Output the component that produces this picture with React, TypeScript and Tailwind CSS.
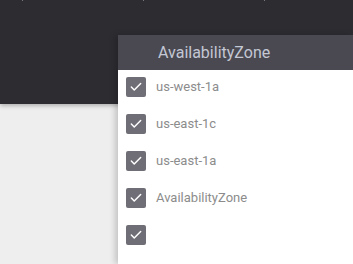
import { Check } from 'lucide-react';

const zones = ['us-west-1a', 'us-east-1c', 'us-east-1a', 'AvailabilityZone', ''];

export default function App() {
  return (
    <div className="relative w-[353px] h-[264px] overflow-hidden bg-[#eeeeee]" style={{ fontFamily: 'Roboto, sans-serif' }}>
      <div className="h-[104px] bg-[#2d2c31] shadow-[0_2px_4px_rgba(0,0,0,0.25)] relative">
        <div className="flex">
          <span className="ml-[22px] w-px h-px bg-[#77767c]" />
          <span className="ml-[120px] w-px h-px bg-[#77767c]" />
          <span className="ml-[120px] w-px h-px bg-[#77767c]" />
        </div>
      </div>

      <div className="absolute left-[118px] top-[35px] right-0 bottom-0 bg-white shadow-[-3px_0_6px_rgba(0,0,0,0.18)]">
        <div className="h-[35px] bg-[#4a4952] flex items-center pl-[40px] text-[16px] text-[#c4c7d4]">
          AvailabilityZone
        </div>
        <ul>
          {zones.map((z, i) => (
            <li key={i} className="h-[37px] flex items-start pt-[7px] pl-[8px]">
              <span className="w-[20px] h-[20px] rounded-[2px] bg-[#6f6e76] flex items-center justify-center">
                <Check size={14} strokeWidth={2.5} className="text-white" />
              </span>
              <span className="ml-[10px] text-[13px] leading-[20px] text-[#8c8c8c]">{z}</span>
            </li>
          ))}
        </ul>
      </div>
    </div>
  );
}
